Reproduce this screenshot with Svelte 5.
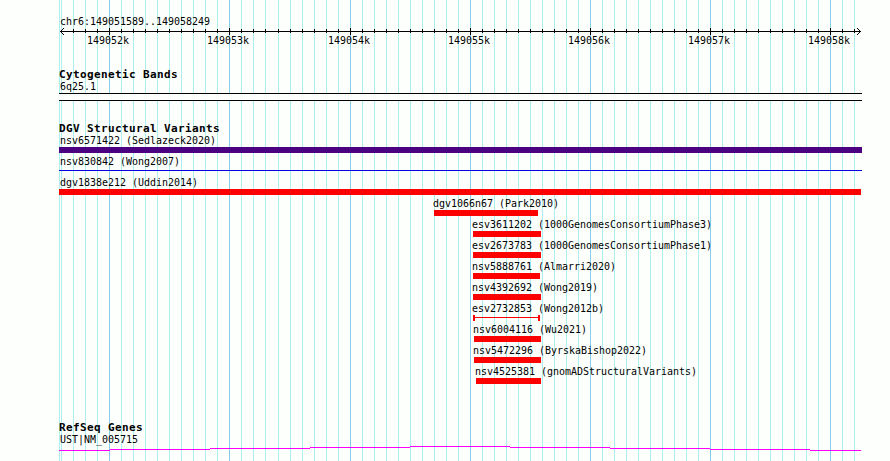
<script lang="ts">
  interface Feature {
    name: string;
    left: number;
    width: number;
    color: string;
    glyph: 'box' | 'line' | 'span';
  }

  const START = 149051589;
  const END = 149058249;
  const WIDTH = 803;
  const PX_PER_BP = 800 / (END - START);

  // x of a position, relative to the left edge of the panel
  function toX(bp: number) {
    return Math.floor(50.84 + (bp - 149052000) * PX_PER_BP);
  }

  const ticks: { x: number; bp: number; major: boolean }[] = [];
  for (let bp = 149051600; bp <= END; bp += 100) {
    ticks.push({ x: toX(bp), bp, major: bp % 1000 === 0 });
  }
  const majors = ticks.filter((t) => t.major);

  const variants: Feature[] = [
    { name: 'nsv6571422 (Sedlazeck2020)', left: 0, width: 803, color: '#4b0082', glyph: 'box' },
    { name: 'nsv830842 (Wong2007)', left: 0, width: 803, color: '#0000e0', glyph: 'line' },
    { name: 'dgv1838e212 (Uddin2014)', left: 0, width: 802, color: '#ff0000', glyph: 'box' },
    { name: 'dgv1066n67 (Park2010)', left: 375, width: 104, color: '#ff0000', glyph: 'box' },
    { name: 'esv3611202 (1000GenomesConsortiumPhase3)', left: 414, width: 68, color: '#ff0000', glyph: 'box' },
    { name: 'esv2673783 (1000GenomesConsortiumPhase1)', left: 414, width: 68, color: '#ff0000', glyph: 'box' },
    { name: 'nsv5888761 (Almarri2020)', left: 414, width: 67, color: '#ff0000', glyph: 'box' },
    { name: 'nsv4392692 (Wong2019)', left: 414, width: 68, color: '#ff0000', glyph: 'box' },
    { name: 'esv2732853 (Wong2012b)', left: 414, width: 67, color: '#ff0000', glyph: 'span' },
    { name: 'nsv6004116 (Wu2021)', left: 415, width: 67, color: '#ff0000', glyph: 'box' },
    { name: 'nsv5472296 (ByrskaBishop2022)', left: 415, width: 67, color: '#ff0000', glyph: 'box' },
    { name: 'nsv4525381 (gnomADStructuralVariants)', left: 417, width: 65, color: '#ff0000', glyph: 'box' }
  ];

  const intron = [
    [0, 51, 4], [51, 100, 3], [151, 100, 2], [251, 100, 1], [351, 100, 0],
    [451, 100, 1], [551, 100, 2], [651, 100, 3], [751, 51, 4]
  ];
</script>

<div class="browser">
  <svg class="grid" width={WIDTH} height="461" shape-rendering="crispEdges">
    <rect x="0" y="0" width="1" height="461" class="minor" />
    {#each ticks as t}
      <rect x={t.x} y="0" width="1" height="461" class={t.major ? 'major' : 'minor'} />
    {/each}
  </svg>

  <header class="ruler">
    <div class="label">chr6:{START}..{END}</div>
    <svg class="axis" width={WIDTH} height="22" shape-rendering="crispEdges">
      <rect x="1" y="6" width="801" height="1" />
      {#each ticks.slice(1) as t}
        <rect x={t.x} y={t.major ? 3 : 4} width="1" height={t.major ? 7 : 4} />
      {/each}
      <path d="M2 5h1v1h-1zM3 4h1v1h-1zM4 3h1v1h-1zM2 7h1v1h-1zM3 8h1v1h-1zM4 9h1v1h-1z" />
      <path d="M800 5h1v1h-1zM799 4h1v1h-1zM798 3h1v1h-1zM800 7h1v1h-1zM799 8h1v1h-1zM798 9h1v1h-1z" />
      {#each majors as t}
        <text transform="translate({t.x - 22} 19) scale(0.906 1)">{t.bp / 1000}k</text>
      {/each}
    </svg>
  </header>

  <section class="bands">
    <h2>Cytogenetic Bands</h2>
    <div class="label">6q25.1</div>
    <div class="band"></div>
  </section>

  <section class="variants">
    <h2>DGV Structural Variants</h2>
    {#each variants as v}
      <div class="feature" style="margin-left: {v.left}px; color: {v.color}">
        <div class="label" class:inner={v.left > 0}>{v.name}</div>
        <div class="glyph {v.glyph}" style="width: {v.width}px"></div>
      </div>
    {/each}
  </section>

  <section class="genes">
    <h2>RefSeq Genes</h2>
    <div class="label">UST|NM_005715</div>
    <svg class="intron" width={WIDTH} height="5" shape-rendering="crispEdges">
      {#each intron as [x, w, y]}
        <rect {x} {y} width={w} height="1" />
      {/each}
    </svg>
  </section>
</div>

<style>
  :global(body) {
    background: #fdfffc;
  }

  .browser {
    position: relative;
    box-sizing: border-box;
    width: 890px;
    height: 461px;
    padding: 15px 0 0 59px;
    overflow: hidden;
    font-family: 'DejaVu Sans Mono', monospace;
    font-size: 11px;
    color: #000;
  }

  svg {
    display: block;
  }

  .grid {
    position: absolute;
    top: 0;
    left: 59px;
  }

  .minor {
    fill: #afeeee;
  }

  .major {
    fill: #87ceeb;
  }

  .ruler,
  section {
    position: relative;
  }

  .label {
    width: max-content;
    height: 11px;
    margin-left: 1.4px;
    line-height: 13px;
    white-space: pre;
    color: #000;
    transform: scaleX(0.906);
    transform-origin: 0 0;
  }

  .label.inner {
    margin-left: -0.6px;
  }

  .axis {
    margin-top: -1px;
  }

  h2 {
    height: 12px;
    margin: 0;
    font-size: 11px;
    font-weight: 700;
    line-height: 13px;
    letter-spacing: 0.38px;
  }

  .bands {
    margin-top: 21px;
  }

  .band {
    width: 803px;
    height: 6px;
    margin-top: 2px;
    border-top: 1px solid #000;
    border-bottom: 1px solid #000;
    background: #fdfffc;
  }

  .variants {
    margin-top: 21px;
  }

  .feature {
    height: 21px;
  }

  .glyph {
    height: 6px;
    margin-top: 2px;
    background: currentColor;
  }

  .glyph.line {
    height: 1px;
    margin-top: 4px;
  }

  .glyph.span {
    box-sizing: border-box;
    border: solid currentColor;
    border-width: 0 2px;
    background: linear-gradient(currentColor, currentColor) 0 2px / 100% 1px no-repeat;
  }

  .genes {
    margin-top: 35px;
  }

  .intron {
    margin-top: 2px;
    fill: #ff00ff;
  }
</style>
